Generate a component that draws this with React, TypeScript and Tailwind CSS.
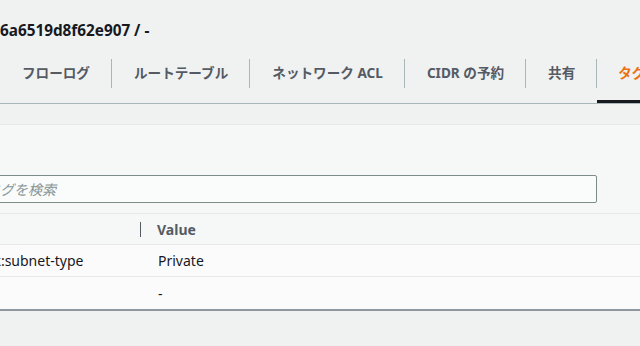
import React from 'react';

const tabs = ['フローログ', 'ルートテーブル', 'ネットワーク ACL', 'CIDR の予約', '共有', 'タグ'];

const rows = [
  { key: 'aws-cdk:subnet-type', value: 'Private' },
  { key: 'Name', value: '-' },
];

const App = () => {
  return (
    <div className="w-[640px] h-[346px] overflow-hidden bg-[#f0f1f1] font-['Noto_Sans','Noto_Sans_CJK_JP',sans-serif] text-[14px]">
      {/* タイトル */}
      <div className="pt-[20px] h-[59px]">
        <h1 className="h-[20px] leading-[20px] text-[15.3px] font-bold text-[#16191f] whitespace-nowrap">
          6a6519d8f62e907 / -
        </h1>
      </div>

      {/* タブ */}
      <div className="flex items-start h-[45px] border-b border-[#aab7b8] whitespace-nowrap">
        {tabs.map((tab, i) => {
          const active = tab === 'タグ';
          return (
            <React.Fragment key={tab}>
              {i > 0 && <div className="w-px h-[29px] bg-[#aab7b8] shrink-0" />}
              <div
                className={
                  active
                    ? 'h-[44px] pl-[21px] pr-[21px] border-b-[3px] border-[#16191f] shrink-0'
                    : 'h-[44px] pl-[22px] pr-[21px] shrink-0'
                }
              >
                <div
                  className={
                    active
                      ? 'h-[29px] flex items-center text-[13.6px] font-bold text-[#ec7211]'
                      : 'h-[29px] flex items-center text-[13.6px] font-bold text-[#545b64]'
                  }
                >
                  {tab}
                </div>
              </div>
            </React.Fragment>
          );
        })}
      </div>

      {/* タグパネル */}
      <div className="mt-[20px] -ml-[72px] w-[760px] bg-[#f6f8f7] border-t border-[#e6e9e9] border-b-2 border-b-[#8f98a0]">
        <div className="pt-[50px] pb-[10px] pl-[45px]">
          <input
            type="text"
            placeholder="タグを検索"
            className="w-[624px] h-[28px] px-[12px] bg-[#fafbfb] border border-[#7d8b8a] rounded-[2px] text-[14px] placeholder:italic placeholder:text-[#879596] outline-none"
          />
        </div>

        <div className="border-t border-[#e6e9e9]">
          <div className="flex h-[31px] items-center border-b border-[#e6e9e9]">
            <div className="w-[213px] h-full flex items-center justify-end shrink-0">
              <div className="w-px h-[15px] bg-[#545b64]" />
            </div>
            <div className="pl-[16px] font-bold text-[#545b64]">Value</div>
          </div>
          {rows.map((row, i) => (
            <div
              key={row.key}
              className={
                i < rows.length - 1
                  ? 'flex h-[32px] items-center bg-[#fbfbfb] border-b border-[#e6e9e9] text-[#16191f]'
                  : 'flex h-[32px] items-center bg-[#fbfbfb] text-[#16191f]'
              }
            >
              <div className="w-[213px] pl-[20px] shrink-0 whitespace-nowrap">{row.key}</div>
              <div className="pl-[17px]">{row.value}</div>
            </div>
          ))}
        </div>
      </div>
    </div>
  );
};

export default App;
